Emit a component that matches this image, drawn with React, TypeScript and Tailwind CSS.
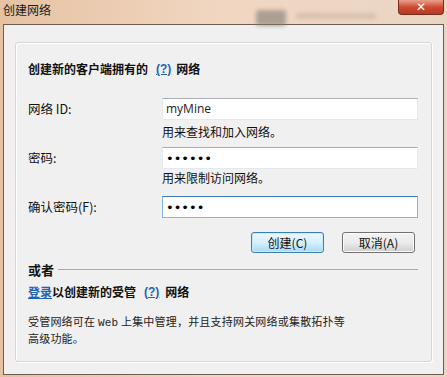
import React from "react";

const cjk = { fontFamily: '"Noto Sans CJK SC", "Liberation Sans", sans-serif' };

function TextBox({ children, focused }: { children: React.ReactNode; focused?: boolean }) {
  return (
    <div
      className={
        "w-[256px] h-[22px] bg-white border flex items-center pl-[3px] " +
        (focused
          ? "border-[#7eb4ea] border-t-[#3d7bad]"
          : "border-[#e3e9ef] border-t-[#abadb3]")
      }
    >
      {children}
    </div>
  );
}

function Dots({ n }: { n: number }) {
  return (
    <span
      className="text-[13px] leading-none text-black tracking-[0px]"
      style={{ fontFamily: '"DejaVu Sans", sans-serif' }}
    >
      {"•".repeat(n)}
    </span>
  );
}

export default function App() {
  return (
    <div
      className="w-[447px] h-[377px] flex flex-col bg-gradient-to-r from-[#e6c2a3] via-[#f1d7c2] to-[#ead5c4]"
      style={cjk}
    >
      {/* title bar */}
      <div className="h-[24px] flex items-start shrink-0">
        <div className="pl-[3px] pt-[2px] text-[12px] leading-[16px] text-[#1b1b1b]">创建网络</div>
        <div className="flex-1 flex items-start">
          <div className="ml-[205px] mt-[10px] w-[30px] h-[16px] rounded-[3px] bg-[#7f7b75] blur-[2px] opacity-60" />
          <div className="ml-[10px] mt-[13px] w-[80px] h-[6px] bg-[#cbb7a6] blur-[2px] opacity-70" />
        </div>
        <div className="w-[46px] h-[15px] mr-[3px] rounded-b-[4px] border border-t-0 border-[#7a2a1c] bg-gradient-to-b from-[#e8a08c] via-[#cf4a31] to-[#b63a24] flex items-center justify-center">
          <span className="text-white text-[12px] leading-none font-bold" style={{ fontFamily: '"DejaVu Sans", sans-serif' }}>✕</span>
        </div>
      </div>

      {/* client area */}
      <div className="mx-[3px] h-[351px] border border-[#6d5c50] bg-[#f0f0f0] shrink-0">
        <div className="mt-[17px] mx-[11px] h-[320px] rounded-[3px] border border-[#d4d6d8] shadow-[inset_1px_1px_0_#ffffff,1px_1px_0_#ffffff] pl-[12px] pr-[13px] flex flex-col">
          {/* heading */}
          <div className="mt-[18px] h-[16px] flex items-center text-[12px] font-bold text-[#111]">
            <span>创建新的客户端拥有的</span>
            <span className="ml-[8px] text-[#1e64b4] underline" style={{ fontFamily: '"Liberation Sans", sans-serif' }}>(?)</span>
            <span className="ml-[5px]">网络</span>
          </div>

          {/* row 1 */}
          <div className="mt-[21px] flex items-center">
            <div className="w-[134px] text-[12.5px] text-[#111]">网络 ID:</div>
            <TextBox>
              <span className="text-[12px] text-[#222]" style={{ fontFamily: '"Open Sans", "Liberation Sans", sans-serif' }}>myMine</span>
            </TextBox>
          </div>
          <div className="ml-[134px] mt-[4px] h-[16px] text-[12px] leading-[16px] text-[#111]">用来查找和加入网络。</div>

          {/* row 2 */}
          <div className="mt-[7px] flex items-center">
            <div className="w-[134px] text-[12.5px] text-[#111]">密码:</div>
            <TextBox>
              <Dots n={6} />
            </TextBox>
          </div>
          <div className="ml-[134px] mt-[1px] h-[16px] text-[12px] leading-[16px] text-[#111]">用来限制访问网络。</div>

          {/* row 3 */}
          <div className="mt-[10px] flex items-center">
            <div className="w-[134px] text-[12.5px] text-[#111]">确认密码(F):</div>
            <TextBox focused>
              <Dots n={5} />
            </TextBox>
          </div>

          {/* buttons */}
          <div className="mt-[14px] flex justify-end gap-[18px] pr-[3px]">
            <button className="w-[73px] h-[21px] rounded-[3px] border border-[#3c7fb1] bg-gradient-to-b from-[#eaf6fd] via-[#d9f0fc] to-[#a7d9f5] text-[12px] text-[#111] shadow-[inset_0_0_0_1px_#c7e9fb]">
              创建(C)
            </button>
            <button className="w-[73px] h-[21px] rounded-[3px] border border-[#707070] bg-gradient-to-b from-[#f2f2f2] via-[#ebebeb] to-[#cfcfcf] text-[12px] text-[#111] shadow-[inset_0_0_0_1px_#fbfbfb]">
              取消(A)
            </button>
          </div>

          {/* separator */}
          <div className="mt-[7px] flex items-center">
            <span className="text-[13px] font-bold text-[#111]">或者</span>
            <div className="ml-[4px] flex-1 h-px bg-[#a9a9a9]" />
          </div>

          {/* link line */}
          <div className="mt-[4px] h-[16px] flex items-center text-[12px] font-bold text-[#111]">
            <span className="text-[#1e64b4] underline">登录</span>
            <span>以创建新的受管</span>
            <span className="ml-[8px] text-[#1e64b4] underline" style={{ fontFamily: '"Liberation Sans", sans-serif' }}>(?)</span>
            <span className="ml-[6px]">网络</span>
          </div>

          {/* paragraph */}
          <div className="mt-[14px] text-[11px] leading-[15px] tracking-[0.2px] text-[#222] w-[340px]">
            受管网络可在 <span style={{ fontFamily: '"Liberation Mono", monospace' }}>Web</span> 上集中管理，并且支持网关网络或集散拓扑等
            <br />
            高级功能。
          </div>
        </div>
      </div>
    </div>
  );
}
